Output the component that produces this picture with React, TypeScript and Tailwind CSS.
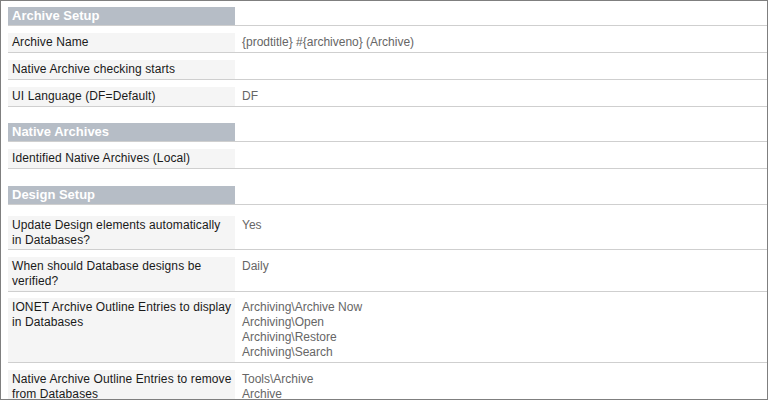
type Row = { label: string[]; value: string[]; gap?: string; pad?: string };
type Section = { title: string; mt: string; rows: Row[] };

const sections: Section[] = [
  {
    title: "Archive Setup",
    mt: "",
    rows: [
      { label: ["Archive Name"], value: ["{prodtitle} #{archiveno} (Archive)"] },
      { label: ["Native Archive checking starts"], value: [] },
      { label: ["UI Language (DF=Default)"], value: ["DF"] },
    ],
  },
  {
    title: "Native Archives",
    mt: "mt-[16px]",
    rows: [{ label: ["Identified Native Archives (Local)"], value: [] }],
  },
  {
    title: "Design Setup",
    mt: "mt-[17px]",
    rows: [
      {
        label: ["Update Design elements automatically", "in Databases?"],
        value: ["Yes"],
        gap: "pt-[11px]",
        pad: "pt-[2px] pb-[1px]",
      },
      { label: ["When should Database designs be", "verified?"], value: ["Daily"] },
      {
        label: ["IONET Archive Outline Entries to display", "in Databases"],
        value: [
          "Archiving\\Archive Now",
          "Archiving\\Open",
          "Archiving\\Restore",
          "Archiving\\Search",
        ],
        gap: "pt-[6px]",
      },
      {
        label: ["Native Archive Outline Entries to remove", "from Databases"],
        value: ["Tools\\Archive", "Archive"],
      },
    ],
  },
];

function SettingRow({ row }: { row: Row }) {
  const lines = Math.max(row.label.length, row.value.length, 1);
  return (
    <div className={`flex border-b border-[#cfcfcf] ${row.gap ?? "pt-[7px]"}`}>
      <div
        className={`w-[227px] shrink-0 overflow-hidden whitespace-nowrap bg-[#f5f5f5] px-[4px] text-[#1a1a1a] tracking-[0.1px] ${row.pad ?? "py-[2px]"}`}
      >
        {row.label.map((l, i) => (
          <div key={i}>{l}</div>
        ))}
        {lines > row.label.length &&
          Array.from({ length: lines - row.label.length }).map((_, i) => (
            <div key={"p" + i}>&nbsp;</div>
          ))}
      </div>
      <div className="pl-[7px] pt-[2px] whitespace-nowrap text-[#666666]">
        {row.value.map((v, i) => (
          <div key={i}>{v}</div>
        ))}
      </div>
    </div>
  );
}

export default function App() {
  return (
    <div
      className="w-[768px] h-[400px] overflow-hidden bg-white border border-[#7f7f7f] text-[12px] leading-[15px]"
      style={{ fontFamily: '"Liberation Sans", Arial, sans-serif' }}
    >
      <div className="pl-[7px] pt-[6px]">
        {sections.map((s) => (
          <div key={s.title} className={s.mt}>
            <div className="border-b border-[#cfcfcf]">
              <div className="w-[227px] h-[18px] bg-[#b6bdc6] px-[4px] text-[13px] leading-[18px] font-bold text-white">
                {s.title}
              </div>
            </div>
            {s.rows.map((r, j) => (
              <SettingRow key={j} row={r} />
            ))}
          </div>
        ))}
      </div>
    </div>
  );
}
